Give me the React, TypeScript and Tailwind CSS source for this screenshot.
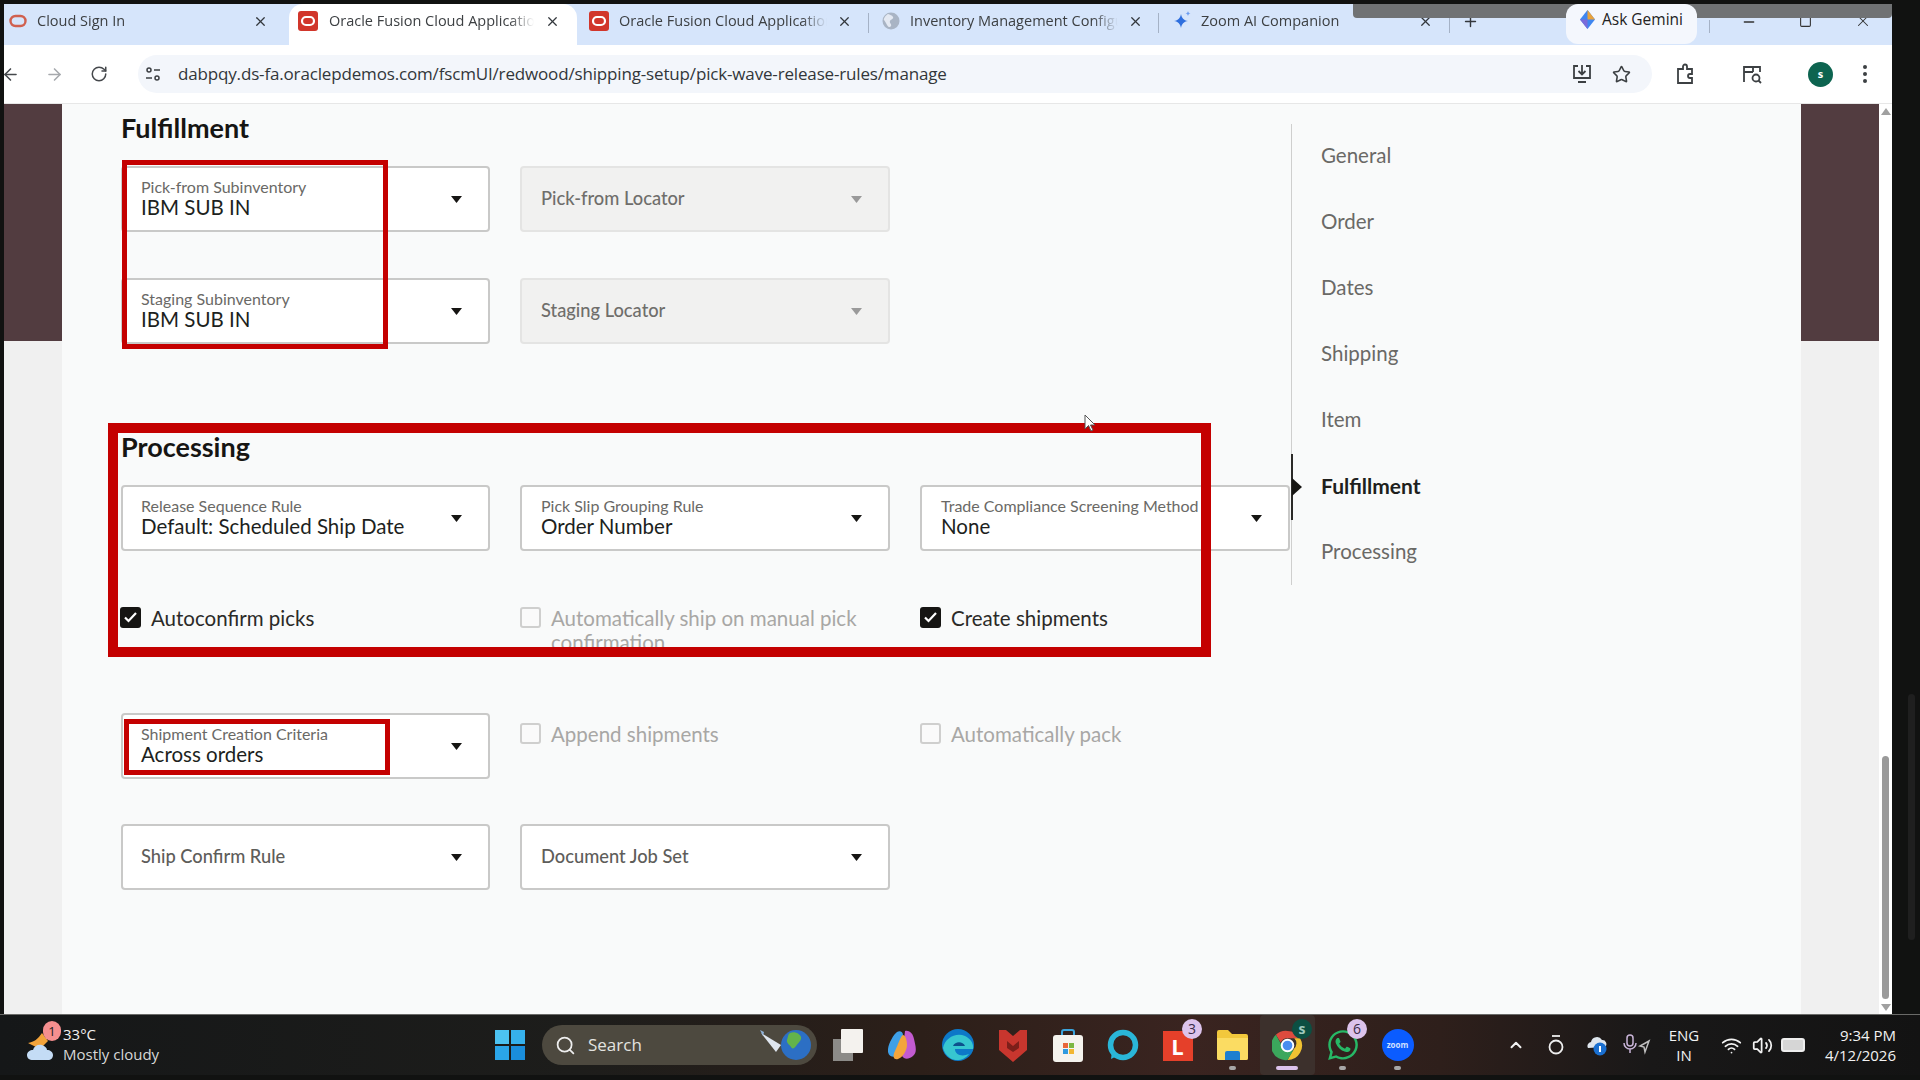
import { ArrowLeft, ArrowRight, ChevronUp, Minus, Plus, RotateCw, Search, Square, Star, Volume2, Wifi, X } from 'lucide-react';
import { FaWhatsapp } from 'react-icons/fa';

const ui = 'font-["Lato",sans-serif]';

function OracleIcon({ solid }: { solid?: boolean }) {
  if (!solid) {
    return (
      <svg width="18" height="18" viewBox="0 0 18 18" className="shrink-0">
        <rect x="1.5" y="4" width="15" height="10" rx="5" fill="none" stroke="#d0604f" strokeWidth="2.4" />
      </svg>
    );
  }
  return (
    <svg width="20" height="20" viewBox="0 0 20 20" className="shrink-0">
      <rect x="0" y="0" width="20" height="20" rx="3" fill="#d1362b" />
      <rect x="4" y="6" width="12" height="8" rx="4" fill="none" stroke="#fff" strokeWidth="2.2" />
    </svg>
  );
}

function GlobeIcon() {
  return (
    <svg width="18" height="18" viewBox="0 0 18 18" className="shrink-0">
      <circle cx="9" cy="9" r="8.5" fill="#a9b4c4" />
      <path d="M6 2c2 1 4 1 5 3s-2 2-3 4 2 3 1 5-3 1-4-1-2-4-3-5 2-5 4-6z" fill="#e4e9f2" />
    </svg>
  );
}

function SparkIcon() {
  return (
    <svg width="20" height="20" viewBox="0 0 20 20" className="shrink-0">
      <path d="M9 3c.8 4 2.6 6.200 7 7-4.400.8-6.200 3-7 7-.8-4-2.600-6.200-7-7 4.400-.8 6.200-3 7-7z" fill="#2f6fde" />
      <path d="M16 0c.3 1.500 1 2.200 2.500 2.500C17 2.800 16.300 3.500 16 5c-.3-1.500-1-2.200-2.500-2.500C15 2.200 15.700 1.500 16 0z" fill="#6b9cf0" />
    </svg>
  );
}

interface TabProps {
  title: string;
  icon: React.ReactNode;
  cls: string;
  active?: boolean;
  sep?: boolean;
}

function Tab({ title, icon, cls, active, sep }: TabProps) {
  return (
    <div className={`${cls} h-full flex items-center pb-[7px] shrink-0 relative ${active ? 'bg-white rounded-t-[14px]' : ''}`}>
      {icon}
      <span className="flex-1 min-w-0 overflow-hidden whitespace-nowrap text-[14.5px] leading-5 text-[#3d4043] [mask-image:linear-gradient(to_right,black_88%,transparent)]">
        {title}
      </span>
      <X size={15} strokeWidth={2} className="text-[#33373c] shrink-0" />
      {sep && <div className="absolute right-0 top-[9px] h-[20px] w-px bg-[#a5b2c6]" />}
    </div>
  );
}

function TabBar() {
  return (
    <div className="h-[41px] bg-[#d6e5fb] flex items-stretch relative shrink-0">
      <Tab title="Cloud Sign In" cls="w-[285px] pl-[5px] pr-[21px] gap-[10px]" icon={<OracleIcon />} />
      <Tab title="Oracle Fusion Cloud Applications" cls="w-[288px] pl-[9px] pr-[17px] gap-[11px]" active icon={<OracleIcon solid />} />
      <Tab title="Oracle Fusion Cloud Applications" cls="w-[292px] pl-[12px] pr-[17px] gap-[10px]" sep icon={<OracleIcon solid />} />
      <Tab title="Inventory Management Configuration" cls="w-[290px] pl-[13px] pr-[16px] gap-[10px]" sep icon={<GlobeIcon />} />
      <Tab title="Zoom AI Companion" cls="w-[291px] pl-[13px] pr-[17px] gap-[9px]" sep icon={<SparkIcon />} />
      <div className="w-[41px] flex items-center justify-center pb-[7px]">
        <Plus size={17} className="text-[#33373c]" />
      </div>
      {/* floating meeting bar, sits behind the Gemini pill */}
      <div className="absolute right-0 top-0 w-[539px] h-[14px] bg-[#707274] rounded-b-[4px]" />
      <div className="relative ml-[75px] mb-[1px] w-[131px] bg-[#f4f7fd] rounded-[12px] flex items-center justify-center gap-[7px] pb-[9px] text-[15.5px] font-medium text-[#222]">
        <svg width="15" height="19" viewBox="0 0 15 19">
          <path d="M7.500 0l7.500 9.500-7.500 9.500L0 9.500z" fill="#3f86f0" />
          <path d="M7.500 0L15 9.500H7.500z" fill="#e9a23b" />
          <path d="M7.500 19L0 9.500h7.500z" fill="#7a6bd9" />
        </svg>
        Ask Gemini
      </div>
      <div className="ml-[12px] mt-[16px] h-[13px] w-px bg-[#a5b2c6]" />
      <div className="flex items-center text-[#333] pb-[7px]">
        <div className="w-[77px] flex justify-center pt-[1px]"><Minus size={16} /></div>
        <div className="w-[36px] flex justify-center"><Square size={13} /></div>
        <div className="w-[66px] flex justify-start pl-[31px]"><X size={18} strokeWidth={1.4} /></div>
      </div>
    </div>
  );
}

function Toolbar() {
  return (
    <div className="h-[59px] bg-white flex items-center shrink-0 border-b border-[#e7e7e7]">
      <div className="w-[134px] flex items-center text-[#45484c]">
        <ArrowLeft size={19} className="ml-[-3px]" />
        <ArrowRight size={19} className="ml-[25px] text-[#a6a9ad]" />
        <RotateCw size={18} className="ml-[26px]" />
      </div>
      <div className="w-[1514px] h-[38px] bg-[#f3f6fb] rounded-full flex items-center">
        <svg width="16" height="16" viewBox="0 0 16 16" className="ml-[7px] shrink-0" fill="none" stroke="#3c4043" strokeWidth="1.500">
          <circle cx="4" cy="4" r="2" />
          <path d="M9 4h6M1 12h6" />
          <circle cx="12" cy="12" r="2" />
        </svg>
        <span className="ml-[17px] text-[17px] text-[#32363a] font-['Open_Sans',sans-serif] whitespace-nowrap tracking-[-0.16px]">
          dabpqy.ds-fa.oraclepdemos.com/fscmUI/redwood/shipping-setup/pick-wave-release-rules/manage
        </span>
        <div className="ml-auto flex items-center mr-[21px] text-[#3c4043]">
          <svg width="22" height="22" viewBox="0 0 22 22" fill="none" stroke="#3c4043" strokeWidth="1.800">
            <path d="M7 3H3v12h16V3h-4M11 2v9M7.500 8l3.500 3.500L14.500 8M7 19h8" />
          </svg>
          <Star size={19} className="ml-[19px]" />
        </div>
      </div>
      <div className="flex items-center text-[#3c4043]">
        <svg width="22" height="22" viewBox="0 0 22 22" fill="none" stroke="#3c4043" strokeWidth="1.800" className="ml-[22px]">
          <path d="M4 6h5V3.500a2 2 0 014 0V6h5v5h-2a2 2 0 000 4h2v5H4z" />
        </svg>
        <svg width="22" height="22" viewBox="0 0 22 22" fill="none" stroke="#3c4043" strokeWidth="1.800" className="ml-[45px]">
          <path d="M3 19V4h16v5M3 9h9M3 4h9v5" />
          <circle cx="15" cy="15" r="3.500" />
          <path d="M17.500 17.500L20 20" />
        </svg>
        <div className="ml-[45px] w-[25px] h-[25px] rounded-full bg-[#0d6450] flex items-center justify-center text-white text-[11px] font-bold">
          s
        </div>
        <div className="ml-[30px] flex flex-col gap-[3px]">
          <div className="w-[4px] h-[4px] rounded-full bg-[#3c4043]" />
          <div className="w-[4px] h-[4px] rounded-full bg-[#3c4043]" />
          <div className="w-[4px] h-[4px] rounded-full bg-[#3c4043]" />
        </div>
      </div>
    </div>
  );
}

function Caret({ muted }: { muted?: boolean }) {
  return (
    <svg width="11" height="7" viewBox="0 0 11 7" className="shrink-0">
      <path d="M0 0h11L5.500 7z" fill={muted ? '#9a9a9a' : '#161513'} />
    </svg>
  );
}

interface FieldProps {
  label: string;
  value?: string;
  disabled?: boolean;
  first?: boolean;
}

function Field({ label, value, disabled, first }: FieldProps) {
  return (
    <div
      className={`h-[66px] rounded-[4px] border-2 flex items-center pr-[26px] ${first ? 'pl-[18px]' : 'pl-[19px]'} ${
        disabled ? 'bg-[#f1f1f0] border-[#e4e4e3]' : 'bg-white border-[#c9c9c8]'
      }`}
    >
      <div className="flex-1 min-w-0">
        {value ? (
          <div className="-mt-[2px]">
            <div className="text-[16px] leading-[18px] text-[#6a6966] whitespace-nowrap">{label}</div>
            <div className="text-[20.5px] leading-[23px] text-[#201f1d] whitespace-nowrap">{value}</div>
          </div>
        ) : (
          <div className={`-mt-[1px] text-[18.3px] font-medium ${disabled ? 'text-[#6f6e6b]' : 'text-[#5e5d5a]'}`}>{label}</div>
        )}
      </div>
      <Caret muted={disabled} />
    </div>
  );
}

function Check({ label, checked, first }: { label: string; checked?: boolean; first?: boolean }) {
  return (
    <div className={`flex items-start gap-[10px] ${first ? '-ml-px' : ''}`}>
      {checked ? (
        <div className="w-[21px] h-[21px] rounded-[3px] bg-[#161513] flex items-center justify-center shrink-0 mt-[1px]">
          <svg width="13" height="11" viewBox="0 0 13 11" fill="none" stroke="#fff" strokeWidth="2.200">
            <path d="M1 5.500l3.500 3.500L12 1" />
          </svg>
        </div>
      ) : (
        <div className="w-[21px] h-[21px] rounded-[3px] border-2 border-[#cfcfce] bg-[#fafafa] shrink-0 mt-[1px]" />
      )}
      <span className={`text-[20.5px] leading-[24px] ${checked ? 'text-[#2b2a28]' : 'text-[#a8a7a5]'}`}>{label}</span>
    </div>
  );
}

const navItems = ['General', 'Order', 'Dates', 'Shipping', 'Item', 'Fulfillment', 'Processing'];

function SideNav() {
  return (
    <div className="mt-[20px] w-[300px] h-[461px] border-l border-[#cfcfce] pl-[29px]">
      {navItems.map(item => (
        <div key={item} className="h-[66px] flex items-center relative">
          <span
            className={`-mt-[3px] ${
              item === 'Fulfillment' ? 'text-[21px] font-bold text-[#201f1d]' : 'text-[20.5px] text-[#6a6966]'
            }`}
          >
            {item}
          </span>
          {item === 'Fulfillment' && (
            <>
              <div className="absolute left-[-30px] top-0 w-[2px] h-[66px] bg-[#2b2a28]" />
              <svg width="10" height="18" viewBox="0 0 10 18" className="absolute left-[-29px] top-[24px]">
                <path d="M0 0l10 9-10 9z" fill="#161513" />
              </svg>
            </>
          )}
        </div>
      ))}
    </div>
  );
}

function SideBand({ width }: { width: string }) {
  return (
    <div className={`${width} flex flex-col shrink-0`}>
      <div className="h-[237px] bg-[#523c40]" />
      <div className="flex-1 bg-[#f0f0f0]" />
    </div>
  );
}

function Page() {
  const cols = 'grid grid-cols-[369px_370px_370px] gap-x-[30px]';
  return (
    <div className={`flex-1 min-h-0 flex ${ui} overflow-hidden`}>
      <SideBand width="w-[58px]" />
      <div className="w-[1739px] bg-[#f9fafa] flex relative">
        <div className="w-[1229px] pl-[59px] pt-[6px]">
          <h2 className="text-[27px] leading-[36px] font-bold text-[#161513] mb-[20px]">Fulfillment</h2>
          <div className={cols}>
            <Field first label="Pick-from Subinventory" value="IBM SUB IN" />
            <Field label="Pick-from Locator" disabled />
            <div />
            <div className="col-span-3 h-[46px]" />
            <Field first label="Staging Subinventory" value="IBM SUB IN" />
            <Field label="Staging Locator" disabled />
          </div>
          <h2 className="mt-[85px] text-[27px] leading-[36px] font-bold text-[#161513] mb-[20px]">Processing</h2>
          <div className={cols}>
            <Field first label="Release Sequence Rule" value="Default: Scheduled Ship Date" />
            <Field label="Pick Slip Grouping Rule" value="Order Number" />
            <Field label="Trade Compliance Screening Method" value="None" />
          </div>
          <div className={`mt-[55px] h-[48px] ${cols}`}>
            <Check first label="Autoconfirm picks" checked />
            <Check label="Automatically ship on manual pick confirmation" />
            <Check label="Create shipments" checked />
          </div>
          <div className={`mt-[59px] ${cols}`}>
            <Field first label="Shipment Creation Criteria" value="Across orders" />
            <div className="pt-[9px]"><Check label="Append shipments" /></div>
            <div className="pt-[9px]"><Check label="Automatically pack" /></div>
          </div>
          <div className={`mt-[45px] ${cols}`}>
            <Field first label="Ship Confirm Rule" />
            <Field label="Document Job Set" />
          </div>
        </div>
        <SideNav />

        {/* annotation boxes drawn over the form */}
        <div className="absolute left-[60px] top-[56px] w-[266px] h-[189px] border-[5px] border-[#c40000]" />
        <div className="absolute left-[46px] top-[319px] w-[1103px] h-[234px] border-[10px] border-[#c40000]" />
        <div className="absolute left-[62px] top-[615px] w-[266px] h-[56px] border-[5px] border-[#c40000]" />
        <svg width="12" height="18" viewBox="0 0 12 18" className="absolute left-[1022px] top-[310px]">
          <path d="M1 1v14l3.500-3.500L7 17l2-1-2.500-5H11z" fill="#fff" stroke="#555" strokeWidth="1" />
        </svg>
      </div>
      <SideBand width="w-[78px]" />
      <div className="w-[13px] bg-white flex flex-col items-center relative">
        <svg width="10" height="7" viewBox="0 0 10 7" className="mt-[4px]"><path d="M5 0l5 7H0z" fill="#a0a0a0" /></svg>
        <div className="mt-[641px] w-[7px] h-[243px] rounded-full bg-[#9a9a9a]" />
        <svg width="10" height="7" viewBox="0 0 10 7" className="mt-[5px]"><path d="M0 0h10L5 7z" fill="#a0a0a0" /></svg>
      </div>
    </div>
  );
}

function WeatherIcon() {
  return (
    <div className="w-[36px] h-[36px] relative shrink-0 -mt-[2px]">
      <svg width="36" height="36" viewBox="0 0 36 36">
        <path d="M2 17c6-1 10-4 14-10l6 8-8 8z" fill="#f2a33a" />
        <path d="M7 34c-4 0-6-2-6-5s3-5 6-5c1-4 5-6 9-5 3 1 5 3 5 5 3 0 6 2 6 5s-2 5-5 5z" fill="#c4dcf5" />
      </svg>
      <div className="absolute right-[1px] top-[-5px] w-[18px] h-[20px] rounded-full bg-[#f58f8f] text-[#222] text-[13px] leading-[20px] text-center">1</div>
    </div>
  );
}

function Badge({ n, dark }: { n: string; dark?: boolean }) {
  return (
    <div
      className={`absolute right-[3px] top-[4px] w-[20px] h-[20px] rounded-full text-center text-[14px] leading-[20px] ${
        dark ? 'bg-[#0c4f42] text-[#9fc9bd] text-[10px] font-bold' : 'bg-[#dcc3ec] text-[#3a2c48]'
      }`}
    >
      {n}
    </div>
  );
}

function TaskIcon({ children, dot, active }: { children: React.ReactNode; dot?: boolean; active?: boolean }) {
  return (
    <div className={`w-[55px] h-full relative flex items-center justify-center shrink-0 ${active ? 'bg-[#3c302c] rounded-[4px]' : ''}`}>
      {children}
      {dot && !active && <div className="absolute bottom-[5px] left-[24px] w-[7px] h-[4px] rounded-full bg-[#a7a7a7]" />}
      {active && <div className="absolute bottom-[5px] left-[16px] w-[22px] h-[4px] rounded-full bg-[#dcc3ec]" />}
    </div>
  );
}

function Taskbar() {
  return (
    <div className="h-[61px] shrink-0 border-t border-[#6a6a68] bg-[linear-gradient(to_right,#151718_0%,#1d1d1b_30%,#2c1f19_48%,#3a2420_62%,#2e1f1b_75%,#191818_86%,#131313_100%)] flex items-stretch pl-[4px] font-['Open_Sans',sans-serif] text-[#f2f2f2]">
      <div className="w-[478px] flex items-center pl-[22px] gap-[1px] shrink-0">
        <WeatherIcon />
        <div className="-mt-[2px]">
          <div className="text-[15px] leading-[20px]">33°C</div>
          <div className="text-[15px] leading-[20px] text-[#d8d8d8]">Mostly cloudy</div>
        </div>
      </div>
      <div className="w-[55px] flex items-center justify-center shrink-0">
        <svg width="30" height="30" viewBox="0 0 30 30">
          <rect x="0" y="0" width="14" height="14" fill="#4cc2f1" />
          <rect x="16" y="0" width="14" height="14" fill="#36b1ec" />
          <rect x="0" y="16" width="14" height="14" fill="#2aa5e8" />
          <rect x="16" y="16" width="14" height="14" fill="#1a8edc" />
        </svg>
      </div>
      <div className="ml-[5px] my-[10px] w-[275px] rounded-full bg-[#4d493f] flex items-center shrink-0">
        <Search size={21} className="ml-[13px] text-[#eee]" />
        <span className="ml-[12px] text-[17px] text-[#e3e3e0]">Search</span>
        <svg width="54" height="34" viewBox="0 0 54 34" className="ml-auto mr-[4px]">
          <circle cx="37" cy="17" r="15" fill="#2c6fc4" />
          <path d="M31 5c5-2 10 1 11 4s-3 6-5 9-4 3-5 1-5-4-4-7 1-6 3-7z" fill="#63b34b" />
          <path d="M2 5l20 12-5 7z" fill="#dfe6ef" />
          <path d="M5 4L1 2l3 6z" fill="#8fb2d9" />
        </svg>
      </div>
      <div className="ml-[3px] flex items-stretch shrink-0">
        <TaskIcon>
          <svg width="30" height="32" viewBox="0 0 30 32">
            <rect x="0" y="10" width="20" height="22" fill="#8c8b88" />
            <rect x="8" y="0" width="22" height="24" rx="1" fill="#f4f2ee" />
          </svg>
        </TaskIcon>
        <TaskIcon>
          <svg width="29" height="30" viewBox="0 0 29 30">
            <path d="M9 2c3-2 6 0 6 3l-5 19c-1 4-9 4-10-2S5 5 9 2z" fill="#3ea0e8" />
            <path d="M17 1c5-1 8 3 9 8s4 13-1 17-9 3-11 0z" fill="#c25bd0" />
            <path d="M15 5c2 0 4 4 4 10s-5 13-9 14-6-2-3-8 6-16 8-16z" fill="#f3a53c" />
          </svg>
        </TaskIcon>
        <TaskIcon>
          <svg width="32" height="32" viewBox="0 0 32 32">
            <circle cx="16" cy="16" r="16" fill="#0d78c8" />
            <path d="M1 19C3 9 14 3 23 7c6 3 9 8 8 13H13c0 6 7 8 14 5-4 6-13 8-19 4C4 26 2 23 1 19z" fill="#37c6d0" />
            <path d="M11 17c2-5 10-5 12 0z" fill="#0d4f8c" />
          </svg>
        </TaskIcon>
        <TaskIcon>
          <svg width="28" height="34" viewBox="0 0 28 34">
            <path d="M0 2h7l7 6 7-6h7v20L14 34 0 22z" fill="#c8362e" />
            <path d="M8 13l6 5 6-5v7l-6 4-6-4z" fill="#7c1f1a" />
          </svg>
        </TaskIcon>
        <TaskIcon>
          <svg width="30" height="34" viewBox="0 0 30 34">
            <path d="M9 8V4a2 2 0 012-2h8a2 2 0 012 2v4" fill="none" stroke="#3ba4dc" strokeWidth="2" />
            <rect x="0" y="7" width="30" height="27" rx="3" fill="#f5f3ee" />
            <rect x="10" y="15" width="5" height="5" fill="#e8663a" />
            <rect x="16" y="15" width="5" height="5" fill="#7cb742" />
            <rect x="10" y="21" width="5" height="5" fill="#2f9ae0" />
            <rect x="16" y="21" width="5" height="5" fill="#f2b632" />
          </svg>
        </TaskIcon>
        <TaskIcon>
          <svg width="32" height="32" viewBox="0 0 32 32">
            <circle cx="16" cy="16" r="12.500" fill="none" stroke="#2ab6d8" strokeWidth="5.500" />
            <path d="M5 22l-1 8 8-4z" fill="#2ab6d8" />
          </svg>
        </TaskIcon>
        <TaskIcon>
          <div className="w-[30px] h-[30px] bg-[#e5402a] flex items-center justify-center text-white text-[22px] font-bold leading-none mt-[2px]">L</div>
          <Badge n="3" />
        </TaskIcon>
        <TaskIcon dot>
          <svg width="31" height="30" viewBox="0 0 31 30">
            <path d="M0 2a2 2 0 012-2h9l4 4h14a2 2 0 012 2v22a2 2 0 01-2 2H2a2 2 0 01-2-2z" fill="#f2c83c" />
            <path d="M0 8h31v20a2 2 0 01-2 2H2a2 2 0 01-2-2z" fill="#fbdc62" />
            <path d="M8 23a2 2 0 012-2h11a2 2 0 012 2v7H8z" fill="#1e7fd0" />
          </svg>
        </TaskIcon>
        <TaskIcon active>
          <svg width="31" height="31" viewBox="0 0 32 32">
            <path d="M16 1a15 15 0 0113 7.500H16a7.500 7.500 0 00-7 4.500L4 5a15 15 0 0112-4z" fill="#dd4b3e" />
            <path d="M29 8.500A15 15 0 0116 31l6.500-11.500A7.500 7.500 0 0023 8.500z" fill="#f1c232" />
            <path d="M16 31A15 15 0 014 5l6.500 11.500A7.500 7.500 0 0022.500 20z" fill="#3ba75c" />
            <circle cx="16" cy="16" r="6" fill="#4a8df0" stroke="#fff" strokeWidth="2" />
          </svg>
          <Badge n="s" dark />
        </TaskIcon>
        <TaskIcon dot>
          <FaWhatsapp size={34} color="#27b866" />
          <Badge n="6" />
        </TaskIcon>
        <TaskIcon dot>
          <div className="w-[32px] h-[32px] rounded-full bg-[#0b5cff] flex items-center justify-center text-[8px] text-[#cfe0ff] font-bold">zoom</div>
        </TaskIcon>
      </div>
      <div className="ml-[71px] flex items-center shrink-0">
        <div className="w-[40px] flex justify-center"><ChevronUp size={18} strokeWidth={2.6} /></div>
        <div className="w-[39px] flex justify-center">
          <svg width="16" height="24" viewBox="0 0 16 24" fill="none" stroke="#eee" strokeWidth="1.800">
            <path d="M4 3h8" />
            <circle cx="8" cy="14" r="6.500" />
          </svg>
        </div>
        <div className="w-[44px] flex justify-center">
          <svg width="24" height="22" viewBox="0 0 24 22">
            <path d="M3 14a4 4 0 013-6 6 6 0 0111-2 4 4 0 013 7z" fill="#dfe6ee" />
            <circle cx="15" cy="15" r="6.500" fill="#1a6fd0" />
            <rect x="14" y="12" width="2" height="6" fill="#fff" />
          </svg>
        </div>
        <div className="w-[36px] flex justify-center">
          <svg width="28" height="24" viewBox="0 0 28 24" fill="none" stroke="#c9b4d8" strokeWidth="1.500">
            <rect x="4" y="2" width="6" height="11" rx="3" />
            <path d="M1 10a6 6 0 0012 0M7 16v4" />
            <path d="M26 8l-9 5 4 1 1 5z" stroke="#bfbfbf" />
          </svg>
        </div>
        <div className="w-[58px] text-center text-[15px] leading-[20px]">ENG<br />IN</div>
        <div className="w-[36px] flex justify-center"><Wifi size={21} /></div>
        <div className="w-[27px] flex justify-center"><Volume2 size={21} /></div>
        <div className="w-[34px] flex justify-center">
          <div className="w-[24px] h-[14px] rounded-[3px] border-2 border-[#eee] bg-[#d6d6d6]" />
        </div>
        <div className="w-[86px] text-right text-[15px] leading-[20px]">9:34 PM<br />4/12/2026</div>
      </div>
    </div>
  );
}

export default function App() {
  return (
    <div className="w-[1920px] h-[1080px] bg-[#111211] flex flex-col pb-[5px] overflow-hidden">
      <div className="flex-1 min-h-0 flex pt-[4px] pl-[4px]">
        <div className="w-[1888px] shrink-0 flex flex-col font-['Open_Sans',sans-serif]">
          <TabBar />
          <Toolbar />
          <Page />
        </div>
        {/* second scrollbar caught by the screen recording */}
        <div className="flex-1 flex flex-col pl-[16px]">
          <div className="mt-[690px] w-[7px] h-[246px] bg-[#1f1f1f] rounded-full" />
        </div>
      </div>
      <Taskbar />
    </div>
  );
}
